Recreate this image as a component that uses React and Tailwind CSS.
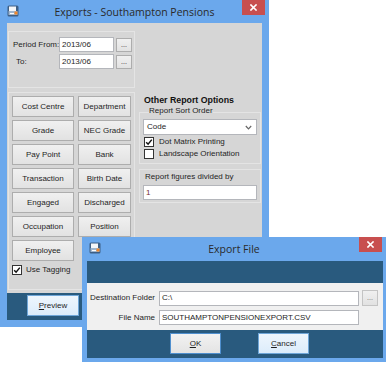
import React from 'react';

const FRAME = 'bg-[#6ba8ec]';

function AppIcon() {
  return (
    <svg width="12" height="12" viewBox="0 0 12 12">
      <rect x="0.5" y="0.5" width="11" height="11" rx="1.5" fill="#3d5f86" />
      <rect x="2" y="1.5" width="7" height="5" fill="#f4f6f9" />
      <rect x="1.5" y="6" width="9" height="4" rx="0.5" fill="#9fb6cf" />
      <rect x="7.5" y="6.5" width="3" height="3" fill="#f0862a" />
      <rect x="3" y="8" width="4" height="1" fill="#ffffff" />
    </svg>
  );
}

function CloseBox() {
  return (
    <div className="absolute right-[4px] top-0 flex h-[15px] w-[23px] items-center justify-center bg-[#c84f4f]">
      <svg width="7" height="7" viewBox="0 0 7 7">
        <path d="M1 1 L6 6 M6 1 L1 6" stroke="#fff" strokeWidth="1.6" strokeLinecap="square" />
      </svg>
    </div>
  );
}

function TitleBar({ title, height }) {
  return (
    <div className={`relative flex items-center ${height}`}>
      <div className="absolute left-[7px] top-[5px]">
        <AppIcon />
      </div>
      <div className="flex-1 text-center font-['Open_Sans',sans-serif] text-[10.5px] text-[#2a2a2a]">
        {title}
      </div>
      <CloseBox />
    </div>
  );
}

function Btn({ children, className = '' }) {
  return (
    <div
      className={`flex items-center justify-center whitespace-nowrap border border-[#adadad] bg-gradient-to-b from-[#f0f0f0] to-[#e2e2e2] text-[#1e1e1e] ${className}`}
    >
      {children}
    </div>
  );
}

function BlueBtn({ children, className = '' }) {
  return (
    <div
      className={`flex items-center justify-center border border-[#6fa6d8] bg-gradient-to-b from-[#eef6fd] to-[#dcecfb] text-[#1e1e1e] ${className}`}
    >
      {children}
    </div>
  );
}

function Field({ value, className = '', textClass = 'text-[#1e1e1e]' }) {
  return (
    <div className={`flex items-center whitespace-nowrap border border-[#b4b6bb] bg-white pl-[2px] ${textClass} ${className}`}>
      {value}
    </div>
  );
}

function Check({ checked }) {
  return (
    <div className="flex h-[10px] w-[10px] items-center justify-center border border-[#333] bg-white">
      {checked && (
        <svg width="8" height="8" viewBox="0 0 8 8">
          <path d="M1.2 4.2 L3.1 6.2 L6.8 1.6" fill="none" stroke="#111" strokeWidth="1.5" />
        </svg>
      )}
    </div>
  );
}

const categories = [
  ['Cost Centre', 'Department'],
  ['Grade', 'NEC Grade'],
  ['Pay Point', 'Bank'],
  ['Transaction', 'Birth Date'],
  ['Engaged', 'Discharged'],
  ['Occupation', 'Position'],
];

function ExportsWindow() {
  return (
    <div className={`absolute left-0 top-0 flex h-[327px] w-[269px] flex-col ${FRAME}`}>
      <TitleBar title="Exports - Southampton Pensions" height="h-[23px]" />
      <div className="mx-[7px] mb-[7px] flex flex-1 flex-col bg-[#d6d6d6]">
        <div className="flex flex-1">
          {/* left column */}
          <div className="ml-[1px] flex w-[127px] flex-col">
            <div className="mt-[8px] flex h-[57px] flex-col gap-[2px] border border-[#e4e4e4] pt-[5px]">
              <div className="flex items-center">
                <span className="w-[50px] shrink-0 whitespace-nowrap pl-[4px]">Period From:</span>
                <Field value="2013/06" className="h-[15px] w-[55px]" />
                <Btn className="ml-[2px] h-[14px] w-[16px] text-[7px]">...</Btn>
              </div>
              <div className="flex items-center">
                <span className="w-[50px] shrink-0 whitespace-nowrap pl-[7px]">To:</span>
                <Field value="2013/06" className="h-[15px] w-[55px]" />
                <Btn className="ml-[2px] h-[14px] w-[16px] text-[7px]">...</Btn>
              </div>
            </div>
            <div className="mt-[4px] mb-[3px] flex flex-1 flex-col border border-[#e4e4e4] pl-[3px] pt-[3px]">
              <div className="grid grid-cols-[62px_53px] gap-x-[4px] gap-y-[3px]">
                {categories.map(([a, b]) => (
                  <React.Fragment key={a}>
                    <Btn className="h-[21px]">{a}</Btn>
                    <Btn className="h-[21px]">{b}</Btn>
                  </React.Fragment>
                ))}
                <Btn className="h-[21px]">Employee</Btn>
              </div>
              <div className="mt-[4px] flex items-center gap-[4px]">
                <Check checked />
                <span>Use Tagging</span>
              </div>
            </div>
          </div>

          {/* right column */}
          <div className="ml-[4px] flex w-[122px] flex-col">
            <div className="mt-[72px] whitespace-nowrap pl-[5px] text-[8.8px] font-bold leading-[11px] text-[#111]">
              Other Report Options
            </div>
            <fieldset className="border border-[#e4e4e4] px-[3px] pb-[3px]">
              <legend className="ml-[6px] pb-[3px] leading-[10px]">Report Sort Order</legend>
              <div className="flex h-[16px] items-center justify-between border border-[#b4b6bb] bg-white pl-[3px] pr-[4px]">
                <span>Code</span>
                <svg width="7" height="5" viewBox="0 0 7 5">
                  <path d="M0.8 1 L3.5 3.8 L6.2 1" fill="none" stroke="#666" strokeWidth="1.2" />
                </svg>
              </div>
              <div className="mt-[1px] flex h-[12px] items-center gap-[5px] pl-[1px]">
                <Check checked />
                <span className="whitespace-nowrap">Dot Matrix Printing</span>
              </div>
              <div className="flex h-[12px] items-center gap-[5px] pl-[1px]">
                <Check />
                <span className="whitespace-nowrap">Landscape Orientation</span>
              </div>
            </fieldset>
            <div className="mt-[5px] flex h-[34px] flex-col border border-[#e4e4e4] px-[3px] pt-[2px]">
              <span className="whitespace-nowrap pl-[2px] leading-[10px]">Report figures divided by</span>
              <Field value="1" className="mt-[3px] h-[15px]" textClass="text-[#7a2e2e]" />
            </div>
          </div>
        </div>
        <div className="flex h-[27px] items-start bg-[#295a7e] pl-[20px] pt-[2px]">
          <BlueBtn className="h-[21px] w-[52px]">
            <span>
              <u>P</u>review
            </span>
          </BlueBtn>
        </div>
      </div>
    </div>
  );
}

function ExportFileWindow() {
  return (
    <div className={`absolute left-[82px] top-[237px] flex h-[125px] w-[304px] flex-col ${FRAME}`}>
      <TitleBar title="Export File" height="h-[24px]" />
      <div className="ml-[5px] mr-[3px] mb-[4px] flex flex-1 flex-col">
        <div className="h-[22px] bg-[#295a7e]" />
        <div className="flex h-[47px] flex-col gap-[4px] bg-[#f0f0f0] pt-[7px]">
          <div className="flex items-center">
            <span className="w-[68px] shrink-0 whitespace-nowrap text-right">Destination Folder</span>
            <Field value="C:\" className="ml-[4px] h-[15px] w-[200px]" />
            <Btn className="ml-[3px] h-[16px] w-[16px] border-[#c4c4c4] text-[7px] text-[#666]">...</Btn>
          </div>
          <div className="flex items-center">
            <span className="w-[68px] shrink-0 whitespace-nowrap text-right">File Name</span>
            <Field value="SOUTHAMPTONPENSIONEXPORT.CSV" className="ml-[4px] h-[15px] w-[200px]" />
          </div>
        </div>
        <div className="flex flex-1 items-start gap-[37px] bg-[#295a7e] pl-[83px] pt-[3px]">
          <div className="flex h-[21px] w-[51px] items-center justify-center border border-[#4f8fce] bg-gradient-to-b from-[#f2f2f2] to-[#e4e4e4]">
            <span>
              <u>O</u>K
            </span>
          </div>
          <BlueBtn className="h-[21px] w-[51px]">
            <span>
              <u>C</u>ancel
            </span>
          </BlueBtn>
        </div>
      </div>
    </div>
  );
}

export default function App() {
  return (
    <div className="relative h-[365px] w-[388px] overflow-hidden bg-white font-['Liberation_Sans',Arial,sans-serif] text-[8px] leading-[10px] text-[#1e1e1e]">
      <ExportsWindow />
      <ExportFileWindow />
    </div>
  );
}
